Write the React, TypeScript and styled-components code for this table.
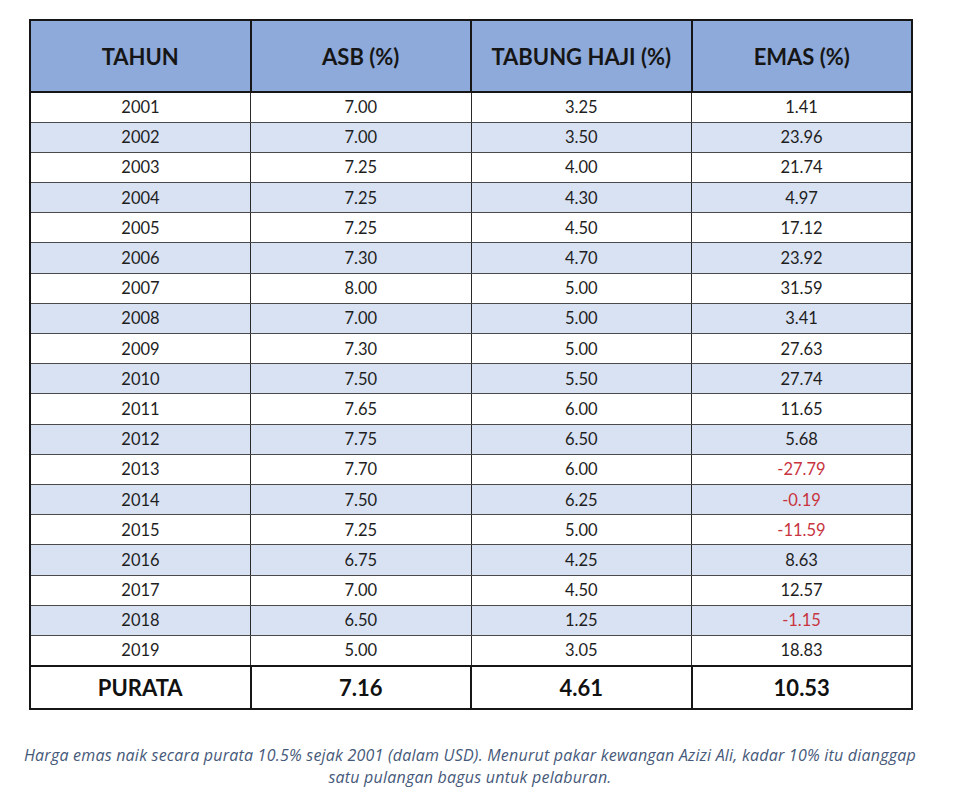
import React from 'react';
import styled, { createGlobalStyle } from 'styled-components';

const GlobalStyle = createGlobalStyle`
  html, body {
    margin: 0;
    padding: 0;
    background: #ffffff;
  }
  body {
    font-family: Lato, "Open Sans", "Liberation Sans", sans-serif;
    color: #1a1a1a;
  }
`;

type Row = { year: string; asb: string; th: string; emas: string };

const rows: Row[] = [
  { year: '2001', asb: '7.00', th: '3.25', emas: '1.41' },
  { year: '2002', asb: '7.00', th: '3.50', emas: '23.96' },
  { year: '2003', asb: '7.25', th: '4.00', emas: '21.74' },
  { year: '2004', asb: '7.25', th: '4.30', emas: '4.97' },
  { year: '2005', asb: '7.25', th: '4.50', emas: '17.12' },
  { year: '2006', asb: '7.30', th: '4.70', emas: '23.92' },
  { year: '2007', asb: '8.00', th: '5.00', emas: '31.59' },
  { year: '2008', asb: '7.00', th: '5.00', emas: '3.41' },
  { year: '2009', asb: '7.30', th: '5.00', emas: '27.63' },
  { year: '2010', asb: '7.50', th: '5.50', emas: '27.74' },
  { year: '2011', asb: '7.65', th: '6.00', emas: '11.65' },
  { year: '2012', asb: '7.75', th: '6.50', emas: '5.68' },
  { year: '2013', asb: '7.70', th: '6.00', emas: '-27.79' },
  { year: '2014', asb: '7.50', th: '6.25', emas: '-0.19' },
  { year: '2015', asb: '7.25', th: '5.00', emas: '-11.59' },
  { year: '2016', asb: '6.75', th: '4.25', emas: '8.63' },
  { year: '2017', asb: '7.00', th: '4.50', emas: '12.57' },
  { year: '2018', asb: '6.50', th: '1.25', emas: '-1.15' },
  { year: '2019', asb: '5.00', th: '3.05', emas: '18.83' },
];

// Layout
const Page = styled.main`
  width: 960px;
  padding: 19px 0 0 29px;
  box-sizing: border-box;
`;

const Table = styled.table`
  width: 884px;
  border-collapse: collapse;
  table-layout: fixed;
  border: 2px solid #161616;
`;

const HeadCell = styled.th`
  height: 70px;
  padding: 0;
  background: #8eaadb;
  border: 2px solid #161616;
  font-size: 22px;
  font-weight: 700;
  color: #161616;
  text-align: center;
  vertical-align: middle;
`;

const DataRow = styled.tr<{ $shaded: boolean }>`
  height: 30.2px;
  background: ${(p) => (p.$shaded ? '#d9e2f3' : '#ffffff')};
`;

const Cell = styled.td<{ $negative?: boolean }>`
  padding: 0;
  border-top: 1px solid #4a4a4a;
  border-bottom: 1px solid #4a4a4a;
  border-left: 1px solid #2a2a2a;
  border-right: 1px solid #2a2a2a;
  font-size: 16.5px;
  color: ${(p) => (p.$negative ? '#c8353f' : '#1e1e1e')};
  text-align: center;
  vertical-align: middle;
`;

const TotalCell = styled.td`
  height: 41px;
  padding: 0;
  border: 2px solid #161616;
  font-size: 22px;
  font-weight: 700;
  color: #111111;
  text-align: center;
  vertical-align: middle;
`;

const Caption = styled.p`
  width: 940px;
  margin: 34px 0 0 -29px;
  font-family: "Open Sans", Lato, sans-serif;
  font-size: 16px;
  font-style: italic;
  letter-spacing: 0.22px;
  line-height: 22px;
  color: #46597a;
  text-align: center;
`;

const App: React.FC = () => (
  <>
    <GlobalStyle />
    <Page>
      <Table>
        <thead>
          <tr>
            <HeadCell>TAHUN</HeadCell>
            <HeadCell>ASB (%)</HeadCell>
            <HeadCell>TABUNG HAJI (%)</HeadCell>
            <HeadCell>EMAS (%)</HeadCell>
          </tr>
        </thead>
        <tbody>
          {rows.map((r, i) => (
            <DataRow key={r.year} $shaded={i % 2 === 1}>
              <Cell>{r.year}</Cell>
              <Cell>{r.asb}</Cell>
              <Cell>{r.th}</Cell>
              <Cell $negative={r.emas.startsWith('-')}>{r.emas}</Cell>
            </DataRow>
          ))}
          <tr>
            <TotalCell>PURATA</TotalCell>
            <TotalCell>7.16</TotalCell>
            <TotalCell>4.61</TotalCell>
            <TotalCell>10.53</TotalCell>
          </tr>
        </tbody>
      </Table>
      <Caption>
        Harga emas naik secara purata 10.5% sejak 2001 (dalam USD). Menurut pakar kewangan Azizi Ali, kadar 10% itu dianggap
        <br />
        satu pulangan bagus untuk pelaburan.
      </Caption>
    </Page>
  </>
);

export default App;
